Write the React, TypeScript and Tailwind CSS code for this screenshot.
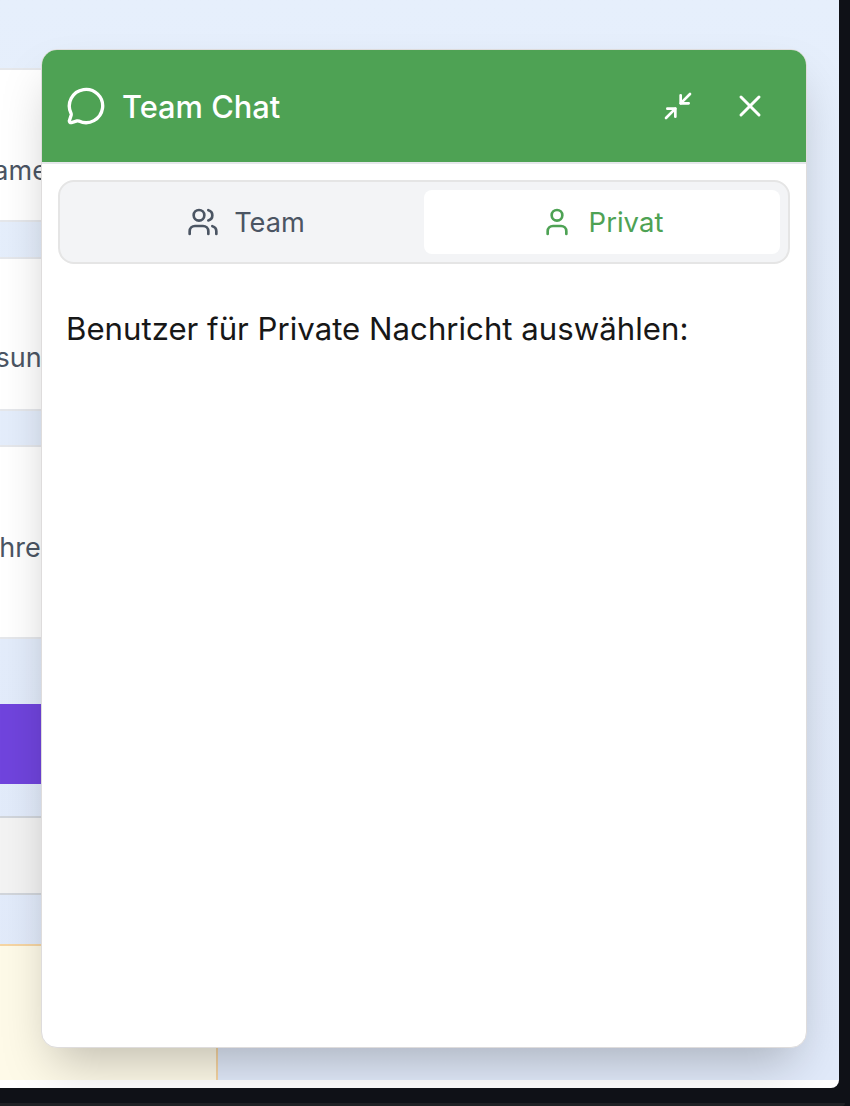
import { MessageCircle, Minimize2, User, Users, X } from 'lucide-react';

export default function App() {
  return (
    <div className="relative h-[1106px] w-[850px] overflow-hidden bg-[#0f1117] font-['Inter',sans-serif]">
      <div className="relative h-[1088px] w-[839px] overflow-hidden rounded-br-lg bg-white">
        {/* page behind the chat */}
        <div className="flex h-[1080px] w-full flex-col bg-gradient-to-b from-[#e6effc] to-[#e1eafa] pt-[68px]">
          <div className="flex h-full w-[218px] flex-col">
            <div className="h-[154px] border-y-2 border-[#e5e7eb] bg-white pt-[84px] text-[27px] leading-[34px] whitespace-nowrap text-[#4b5563]">
              <span className="ml-[-27px]">Name</span>
            </div>
            <div className="mt-[35px] h-[154px] border-y-2 border-[#e5e7eb] bg-white pt-[82px] text-[27px] leading-[34px] whitespace-nowrap text-[#4b5563]">
              <span className="ml-[-36px]">Lösung</span>
            </div>
            <div className="mt-[34px] h-[194px] border-y-2 border-[#e5e7eb] bg-white pt-[84px] text-[27px] leading-[34px] whitespace-nowrap text-[#4b5563]">
              <span className="ml-[-8px]">Ihre</span>
            </div>
            <div className="mt-[65px] h-[80px] shrink-0 bg-[#7044dd]" />
            <div className="mt-[32px] h-[79px] shrink-0 border-y-2 border-[#d1d5db] bg-[#f3f3f3]" />
            <div className="mt-[49px] min-h-0 flex-1 border-t-2 border-r-2 border-[#f6d5a3] bg-[#fefae8]" />
          </div>
        </div>

        <div className="absolute top-[49px] left-[41px] flex h-[999px] w-[766px] flex-col overflow-hidden rounded-2xl border border-[#dedcdc] bg-white shadow-2xl">
          <div className="flex h-[114px] shrink-0 items-center border-b-2 border-[#e5e7eb] bg-[#4ea254] pr-[36px] pl-[24px] text-white">
            <MessageCircle size={40} strokeWidth={2} />
            <span className="mt-[2px] ml-[16px] text-[30.8px] font-medium">Team Chat</span>
            <button className="ml-auto flex h-[40px] w-[40px] items-center justify-center">
              <Minimize2 size={32} strokeWidth={2} />
            </button>
            <button className="ml-[32px] flex h-[40px] w-[40px] items-center justify-center">
              <X size={36} strokeWidth={2} />
            </button>
          </div>

          <div className="mx-[16px] mt-[16px] flex h-[84px] shrink-0 items-center rounded-2xl border-2 border-[#e5e5e5] bg-[#f3f4f6] px-[8px]">
            <button className="flex h-[64px] flex-1 items-center justify-center gap-[15px] rounded-lg text-[27.2px] text-[#4b5563]">
              <Users size={32} strokeWidth={2} />
              <span className="mt-[2px]">Team</span>
            </button>
            <button className="flex h-[64px] flex-1 items-center justify-center gap-[16px] rounded-lg bg-white text-[27.5px] text-[#4ea254]">
              <User size={32} strokeWidth={2} />
              <span className="mt-[2px]">Privat</span>
            </button>
          </div>

          <p className="mt-[45px] ml-[24px] text-[31.2px] leading-[40px] text-[#171717]">Benutzer für Private Nachricht auswählen:</p>
        </div>
      </div>
      <div className="mt-[15px] h-[3px] w-[845px] rounded-br-lg bg-[#1f2024]" />
    </div>
  );
}
